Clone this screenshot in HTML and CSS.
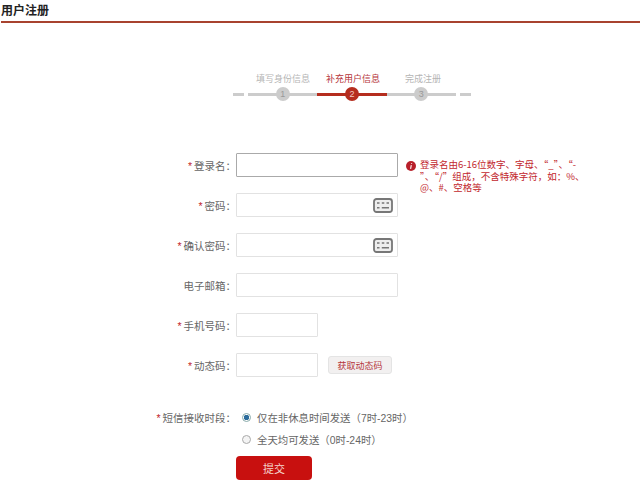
FILE: index.html
```html
<!DOCTYPE html>
<html lang="zh">
<head>
<meta charset="utf-8">
<title>用户注册</title>
<link rel="stylesheet" href="styles.css">
</head>
<body>
<header class="page-head"><h1>用户注册</h1></header>

<section class="steps">
  <div class="step-labels">
    <span class="step-label">填写身份信息</span>
    <span class="step-label current">补充用户信息</span>
    <span class="step-label">完成注册</span>
  </div>
  <div class="track">
    <i class="dash"></i>
    <div class="seg"><b class="dot">1</b></div>
    <div class="seg active"><b class="dot">2</b></div>
    <div class="seg"><b class="dot">3</b></div>
    <i class="dash"></i>
  </div>
</section>

<form class="form">
  <div class="row">
    <label class="lbl"><em>*</em>登录名：</label>
    <input class="field wide focus" type="text">
    <div class="hint">
      <svg class="hint-icon" viewBox="0 0 10 10"><circle cx="5" cy="5" r="5" fill="#b8202a"/><path d="M5.6 2.2v.9M5.300 4.200 4.600 7.800" stroke="#fff" stroke-width="1.100" fill="none"/></svg>
      <p>登录名由6-16位数字、字母、“_”、“-<br>”、“/”组成，不含特殊字符，如：%、<br>@、#、空格等</p>
    </div>
  </div>
  <div class="row">
    <label class="lbl"><em>*</em>密码：</label>
    <div class="field wide kb-wrap">
      <svg class="kb" viewBox="0 0 20 15"><rect x="1" y="1" width="18" height="13" rx="2.500" fill="#eee" stroke="#777" stroke-width="1.800"/><path d="M4 5h2.500M8.800 5h2.500M13.500 5h2.500M4 9.800h2.500M8.800 9.800h7.200" stroke="#777" stroke-width="1.600" fill="none"/></svg>
    </div>
  </div>
  <div class="row">
    <label class="lbl"><em>*</em>确认密码：</label>
    <div class="field wide kb-wrap">
      <svg class="kb" viewBox="0 0 20 15"><rect x="1" y="1" width="18" height="13" rx="2.500" fill="#eee" stroke="#777" stroke-width="1.800"/><path d="M4 5h2.500M8.800 5h2.500M13.500 5h2.500M4 9.800h2.500M8.800 9.800h7.200" stroke="#777" stroke-width="1.600" fill="none"/></svg>
    </div>
  </div>
  <div class="row">
    <label class="lbl">电子邮箱：</label>
    <input class="field wide" type="text">
  </div>
  <div class="row">
    <label class="lbl"><em>*</em>手机号码：</label>
    <input class="field short" type="text">
  </div>
  <div class="row">
    <label class="lbl"><em>*</em>动态码：</label>
    <input class="field short" type="text">
    <button class="code-btn" type="button">获取动态码</button>
  </div>

  <div class="row radio-row first">
    <label class="lbl"><em>*</em>短信接收时段：</label>
    <span class="radio on"></span><span class="radio-text">仅在非休息时间发送（7时-23时）</span>
  </div>
  <div class="row radio-row">
    <span class="lbl"></span>
    <span class="radio"></span><span class="radio-text">全天均可发送（0时-24时）</span>
  </div>
  <div class="row submit-row">
    <span class="lbl"></span>
    <button class="submit" type="button">提交</button>
  </div>
</form>
</body>
</html>
```
FILE: styles.css
```css
* { box-sizing: border-box; }
html, body { margin: 0; padding: 0; }
body {
  width: 640px;
  height: 489px;
  overflow: hidden;
  background: #fff;
  color: #666;
  font-family: "Liberation Sans", "Noto Sans CJK SC", sans-serif;
  font-size: 11px;
}
.page-head {
  height: 23px;
  margin-left: 1px;
  border-bottom: 2px solid #a8432f;
}
.page-head h1 {
  margin: 0;
  padding-top: 3px;
  font-size: 12px;
  line-height: 16px;
  font-weight: 700;
  color: #222;
}
.steps {
  width: 238px;
  margin: 50px 0 0 233px;
}
.step-labels {
  display: flex;
  height: 13px;
  margin-left: 15px;
}
.step-label {
  width: 70px;
  text-align: center;
  font-size: 9px;
  line-height: 13px;
  color: #b5b5b5;
  white-space: nowrap;
}
.step-label.current { color: #b5343a; }
.track {
  display: flex;
  align-items: center;
  height: 16px;
}
.dash {
  width: 11px;
  height: 3px;
  background: #ccc;
}
.seg {
  display: flex;
  justify-content: center;
  align-items: center;
  width: 69.500px;
  height: 3px;
  background: #ccc;
}
.track .dash:first-child { margin-right: 4px; }
.track .dash:last-child { margin-left: 4px; }
.seg.active { background: #b52d1e; }
.dot {
  flex: none;
  width: 14px;
  height: 14px;
  border-radius: 50%;
  background: #ccc;
  color: #999;
  font-size: 9px;
  font-weight: 400;
  line-height: 14px;
  text-align: center;
}
.active .dot { background: #b52d1e; color: #f3c9c0; }
.form { margin-top: 51px; }
.row {
  display: flex;
  align-items: center;
  height: 24px;
  margin-bottom: 16px;
}
.lbl {
  flex: none;
  width: 236px;
  text-align: right;
  font-size: 10.500px;
  color: #666;
}
.lbl em {
  margin-right: 2px;
  font-style: normal;
  color: #c2272d;
}
.field {
  flex: none;
  display: block;
  height: 24px;
  margin: 0;
  padding: 0;
  background: #fff;
  border: 1px solid #e2e2e2;
  border-radius: 1px;
}
.field.wide { width: 162px; }
.field.short { width: 82px; }
.field.focus { border-color: #aaa; }
.kb-wrap {
  display: flex;
  justify-content: flex-end;
  align-items: center;
  padding-right: 4px;
}
.kb { width: 20px; height: 15px; }
.hint {
  display: flex;
  align-self: flex-start;
  flex: none;
  width: 178px;
  height: 36px;
  margin: 6px 0 0 8px;
  color: #c2272d;
}
.hint-icon { flex: none; width: 10px; height: 10px; margin: 2px 4px 0 0; }
.hint p {
  margin: 0;
  font-family: "Noto Sans CJK SC", sans-serif;
  font-size: 9.500px;
  line-height: 11.500px;
  white-space: nowrap;
}
.code-btn {
  flex: none;
  width: 64px;
  height: 18px;
  margin-left: 10px;
  padding: 0;
  border: 1px solid #e4e4e4;
  border-radius: 3px;
  background: #f2f0f0;
  color: #b5343a;
  font: 9px "Liberation Sans", "Noto Sans CJK SC", sans-serif;
}
.radio-row { height: 16px; margin-bottom: 6px; }
.radio-row.first { margin-top: 32px; }
.radio {
  flex: none;
  width: 9px;
  height: 9px;
  margin: 0 6px 0 6px;
  border: 1px solid #aaa;
  border-radius: 50%;
  background: #f4f4f4;
}
.radio.on { background: radial-gradient(circle, #2c6c9c 0 2.500px, #fff 3px); border-color: #8aa; }
.radio-text { font-size: 10.400px; color: #666; white-space: nowrap; }
.submit-row { margin: 9px 0 0; height: 24px; }
.submit {
  flex: none;
  width: 76px;
  height: 24px;
  padding: 0;
  border: 0;
  border-radius: 4px;
  background: #c8100f;
  color: #f6d8d0;
  font: 11px "Liberation Sans", "Noto Sans CJK SC", sans-serif;
}
```
